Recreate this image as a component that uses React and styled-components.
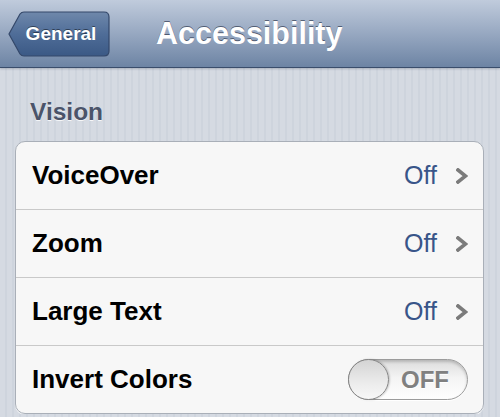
import styled, { createGlobalStyle } from 'styled-components';

const GlobalStyle = createGlobalStyle`
  body {
    margin: 0;
    font-family: "Liberation Sans", Arial, sans-serif;
    background: repeating-linear-gradient(90deg, #d5dae2 0 5px, #ced4dd 5px 7px);
    overflow: hidden;
  }
`

const rows = [
    { label: 'VoiceOver', value: 'Off' },
    { label: 'Zoom', value: 'Off' },
    { label: 'Large Text', value: 'Off' },
    { label: 'Invert Colors', toggle: true },
]

const Chevron = () => (
    <svg width="12" height="16" viewBox="0 0 12 16">
        <polyline points="2,2 9.5,8 2,14" fill="none" stroke="#7b7b7b" strokeWidth="3.6" strokeLinecap="square" />
    </svg>
)

const BackShape = () => (
    <svg width="102" height="46" viewBox="0 0 102 46">
        <defs>
            <linearGradient id="back" x1="0" y1="0" x2="0" y2="1">
                <stop offset="0" stopColor="#6f88ab" />
                <stop offset="0.5" stopColor="#4f6d98" />
                <stop offset="1" stopColor="#3b5985" />
            </linearGradient>
        </defs>
        <path d="M1 23 L12 3 Q13.5 1 16 1 L96 1 Q101 1 101 6 L101 40 Q101 45 96 45 L16 45 Q13.5 45 12 43 Z"
            fill="url(#back)" stroke="#34486a" strokeWidth="1.2" />
    </svg>
)

export default function App() {
    return (
        <>
            <GlobalStyle />
            <NavBar>
                <BackButton>
                    <BackShape />
                    <BackLabel>General</BackLabel>
                </BackButton>
                <Title>Accessibility</Title>
            </NavBar>
            <SectionHeader>Vision</SectionHeader>
            <Group>
                {rows.map(row => (
                    <Row key={row.label}>
                        <Label>{row.label}</Label>
                        {row.toggle ? (
                            <Toggle>
                                <Knob />
                                <ToggleText>OFF</ToggleText>
                            </Toggle>
                        ) : (
                            <Detail>
                                <Value>{row.value}</Value>
                                <Chevron />
                            </Detail>
                        )}
                    </Row>
                ))}
            </Group>
        </>
    )
}

const NavBar = styled.div`
    height: 67px;
    display: flex;
    align-items: center;
    gap: 46px;
    padding-left: 8px;
    background: linear-gradient(#c0cbdc, #97a8c1 50%, #6d84a4);
    border-bottom: 1px solid #3a4d6b;
    box-shadow: 0 1px 2px rgba(40, 50, 70, 0.25);
`

const BackButton = styled.div`
    position: relative;
    width: 102px;
    height: 46px;
    svg {
        position: absolute;
        left: 0;
        top: 0;
    }
`

const BackLabel = styled.span`
    position: absolute;
    left: 12px;
    right: 8px;
    top: 0;
    bottom: 0;
    display: flex;
    align-items: center;
    justify-content: center;
    color: white;
    font-weight: bold;
    font-size: 19px;
    text-shadow: 0 -1px 0 rgba(0, 0, 0, 0.45);
`

const Title = styled.h1`
    margin: 0;
    color: white;
    font-size: 30.5px;
    font-weight: bold;
    text-shadow: 0 -1px 0 rgba(30, 40, 60, 0.6);
`

const SectionHeader = styled.div`
    padding: 30px 0 0 30px;
    margin-bottom: 15px;
    font-size: 24.5px;
    line-height: 28px;
    font-weight: bold;
    color: #4b546a;
    text-shadow: 0 1px 0 rgba(255, 255, 255, 0.8);
`

const Group = styled.div`
    margin: 0 16px 0 15px;
    background: #f7f7f7;
    border: 1px solid #a9afb8;
    border-radius: 10px;
    box-shadow: 0 1px 0 rgba(255, 255, 255, 0.7);
`

const Row = styled.div`
    height: 67px;
    display: flex;
    align-items: center;
    justify-content: space-between;
    padding: 0 15px 0 16px;
    & + & {
        border-top: 1px solid #c9c9c9;
    }
`

const Label = styled.span`
    font-size: 26px;
    font-weight: bold;
    color: #000;
`

const Detail = styled.div`
    display: flex;
    align-items: center;
    gap: 19px;
`

const Value = styled.span`
    font-size: 25px;
    color: #395589;
`

const Toggle = styled.div`
    width: 118px;
    height: 39px;
    border-radius: 21px;
    border: 1px solid #9c9c9c;
    background: linear-gradient(#dcdcdc, #f4f4f4 45%, #ffffff);
    box-shadow: inset 0 2px 3px rgba(0, 0, 0, 0.18), 0 1px 0 #fff;
    display: flex;
    align-items: center;
`

const Knob = styled.div`
    width: 41px;
    height: 41px;
    margin-left: -1px;
    border-radius: 50%;
    border: 1px solid #858585;
    box-sizing: border-box;
    background: linear-gradient(#d4d4d4, #ececec 60%, #f8f8f8);
    box-shadow: 1px 0 2px rgba(0, 0, 0, 0.2);
`

const ToggleText = styled.span`
    flex: 1;
    text-align: center;
    padding-right: 6px;
    font-size: 24px;
    font-weight: bold;
    color: #808080;
    text-shadow: 0 1px 0 #fff;
`
